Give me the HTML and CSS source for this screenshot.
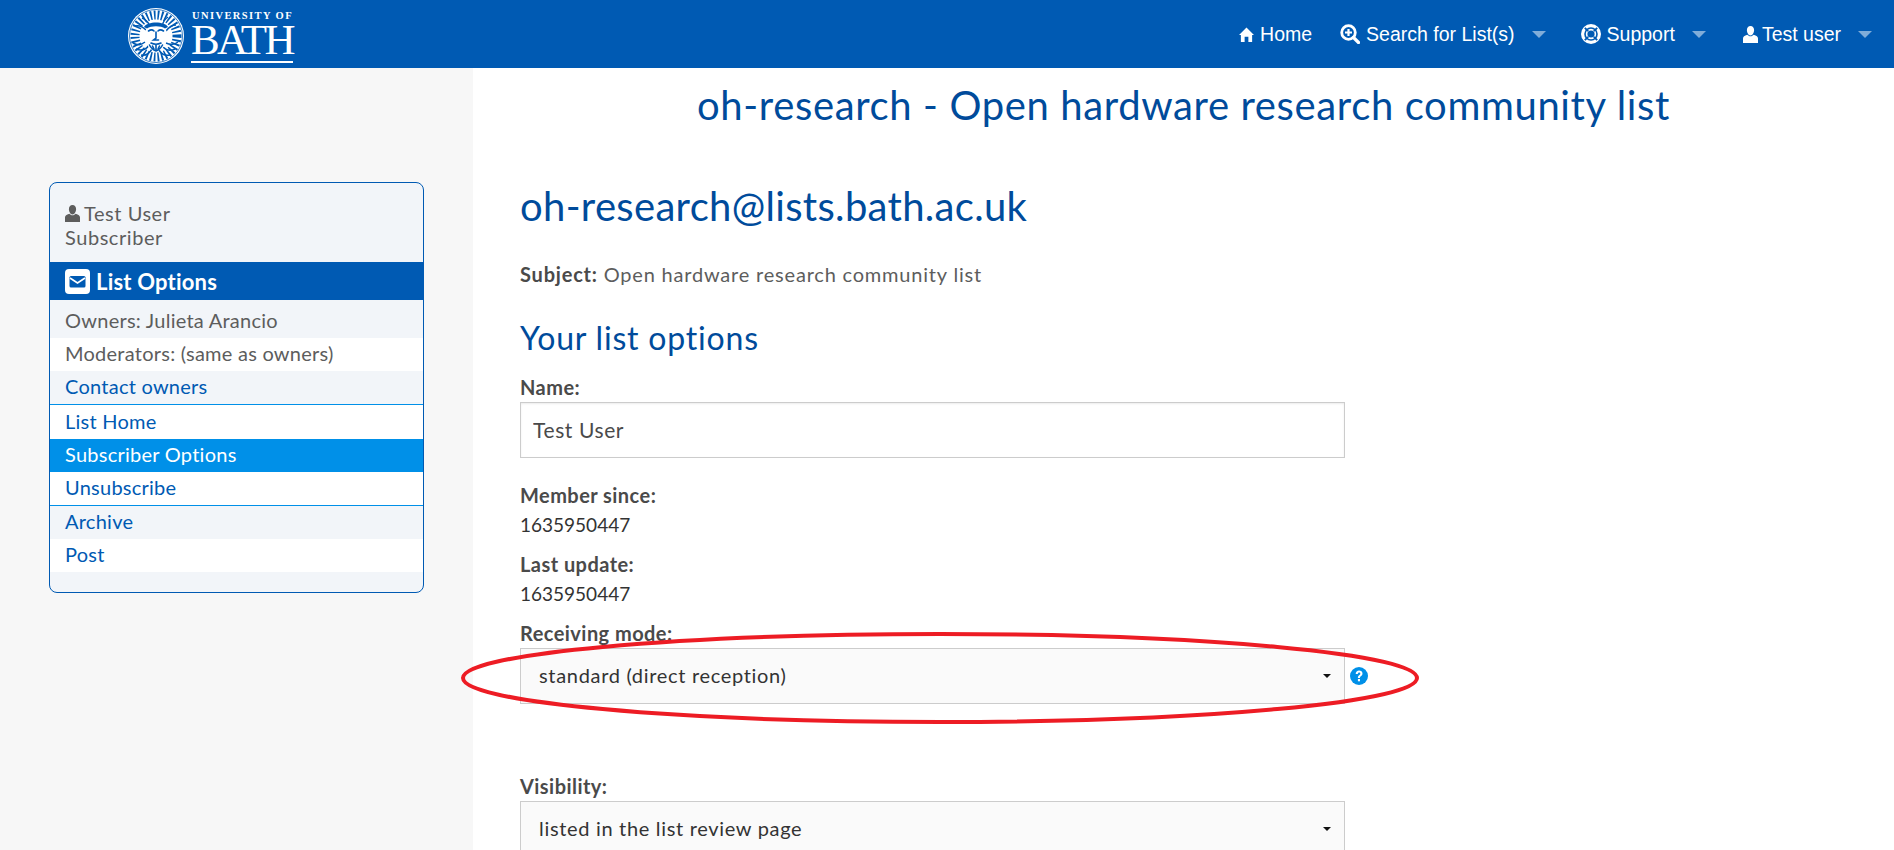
FILE: index.html
```html
<!DOCTYPE html>
<html lang="en">
<head>
<meta charset="utf-8">
<title>oh-research - Open hardware research community list</title>
<link rel="stylesheet" href="styles.css">
</head>
<body>
<header class="topbar">
  <a class="logo" href="#">
    <svg class="crest" viewBox="0 0 56 56" aria-hidden="true">
      <circle cx="28" cy="28" r="28" fill="#fff"/>
      <circle cx="28" cy="28" r="26.500" fill="none" stroke="#005ab3" stroke-width=".8"/>
      <circle cx="28" cy="28" r="21" fill="none" stroke="#005ab3" stroke-width="9" stroke-dasharray="1.700 2"/>
      <g fill="none" stroke="#005ab3" stroke-width="1.500">
        <path d="M5 35c5 3 8 2 12-1M8 41c5 2 10 1 13-4M13 47c4 1 8-1 11-6M31 42c3 5 7 6 11 5M35 39c4 4 8 4 12 2M38 35c4 2 8 2 12-1M7 18c4-1 7 0 11 4M14 10c3 1 6 4 8 8M40 9c-3 2-5 5-6 9M48 17c-4 0-7 2-10 6"/>
      </g>
      <ellipse cx="28" cy="28" rx="11" ry="15" fill="#fff"/>
      <g fill="none" stroke="#005ab3" stroke-width="1.600" stroke-linecap="round">
        <path d="M20.500 23c2-1.500 4-1.500 5.500 0M30 23c1.500-1.500 3.500-1.500 5.500 0M28 24v6l-2.500 2h5"/>
        <path d="M23 35c3 1.500 7 1.500 10 0M21.500 37c1.500 3 3.500 5 6.500 6M34.500 37c-1.500 3-3.500 5-6.500 6M28 37v5M24.500 38l1.500 3M31.500 38l-1.500 3"/>
      </g>
      <path d="M16 19c3-6 21-6 24 0l-3 1.500c-4-3-14-3-18 0z" fill="#005ab3"/>
    </svg>
    <span class="wordmark">
      <span class="wordmark-top">UNIVERSITY OF</span>
      <span class="wordmark-name">BATH</span>
    </span>
  </a>
  <nav class="nav">
    <a class="nav-item" href="#">
      <svg class="nav-icon" viewBox="0 0 16 16" aria-hidden="true"><path d="M8 .5 16 8.500h-2V16h-4v-5.500H6V16H2V8.500H0z" fill="#fff"/></svg>Home
    </a>
    <a class="nav-item nav-drop nav-search" href="#">
      <svg class="nav-icon nav-icon-lg" viewBox="0 0 20 20" aria-hidden="true"><circle cx="8.500" cy="8.500" r="6.800" fill="none" stroke="#fff" stroke-width="2.800"/><path d="M8.500 5v7M5 8.500h7" stroke="#fff" stroke-width="2.200"/><path d="M13.500 13.500l5 5" stroke="#fff" stroke-width="3.200" stroke-linecap="round"/></svg>Search for List(s)
    </a>
    <a class="nav-item nav-drop nav-support" href="#">
      <svg class="nav-icon nav-icon-lg" viewBox="0 0 20 20" aria-hidden="true"><circle cx="10" cy="10" r="10" fill="#fff"/><circle cx="10" cy="10" r="6.800" fill="#005ab3"/><circle cx="10" cy="10" r="5.200" fill="#fff"/><circle cx="10" cy="10" r="3.600" fill="#005ab3"/><path d="M3.800 3.800l3.400 3.400M16.200 3.800l-3.400 3.400M3.800 16.200l3.400-3.400M16.200 16.200l-3.400-3.400" stroke="#005ab3" stroke-width="1.800"/></svg>Support
    </a>
    <a class="nav-item nav-drop nav-user" href="#">
      <svg class="nav-icon" viewBox="0 0 15 17" aria-hidden="true"><path d="M7.500 0c2.300 0 3.600 1.700 3.600 4S9.800 9.500 7.500 9.500 3.900 6.300 3.900 4 5.200 0 7.500 0zM4.300 8.700C1.500 9.600 0 10.800 0 12.500V17h15v-4.500c0-1.700-1.500-2.900-4.300-3.800-.8.900-2 1.500-3.200 1.500s-2.400-.6-3.200-1.500z" fill="#fff"/></svg>Test user
    </a>
  </nav>
</header>

<div class="page">
  <aside class="sidebar">
    <div class="panel">
      <div class="panel-user">
        <div class="user-line"><svg class="user-icon" viewBox="0 0 15 17" aria-hidden="true"><path d="M7.500 0c2.300 0 3.600 1.700 3.600 4S9.800 9.500 7.500 9.500 3.900 6.300 3.900 4 5.200 0 7.500 0zM4.300 8.700C1.500 9.600 0 10.800 0 12.500V17h15v-4.500c0-1.700-1.500-2.900-4.300-3.800-.8.900-2 1.500-3.200 1.500s-2.400-.6-3.200-1.500z" fill="#5d5d5d"/></svg>Test User</div>
        <div>Subscriber</div>
      </div>
      <div class="panel-title">
        <svg class="mail-icon" viewBox="0 0 25 25" aria-hidden="true"><rect width="25" height="25" rx="4" fill="#fff"/><rect x="4.500" y="7" width="16" height="11.500" rx="1.500" fill="#005ab3"/><path d="M5 9l7.500 5L20 9" fill="none" stroke="#fff" stroke-width="1.600"/></svg>
        <span>List Options</span>
      </div>
      <ul class="menu">
        <li class="row row-owners tint">Owners: Julieta Arancio</li>
        <li class="row">Moderators: (same as owners)</li>
        <li class="row tint rule"><a href="#">Contact owners</a></li>
        <li class="row row-home"><a href="#">List Home</a></li>
        <li class="row active"><a href="#">Subscriber Options</a></li>
        <li class="row rule"><a href="#">Unsubscribe</a></li>
        <li class="row tint"><a href="#">Archive</a></li>
        <li class="row"><a href="#">Post</a></li>
      </ul>
    </div>
  </aside>

  <main class="content">
    <h1 class="page-title">oh-research - Open hardware research community list</h1>
    <h2 class="list-address">oh-research@lists.bath.ac.uk</h2>
    <p class="subject"><strong>Subject:</strong> Open hardware research community list</p>
    <h3 class="section-title">Your list options</h3>
    <form class="options">
      <label class="field-label" for="name">Name:</label>
      <input class="text-input" id="name" type="text" value="Test User">
      <div class="field-label label-since">Member since:</div>
      <div class="field-value">1635950447</div>
      <div class="field-label label-update">Last update:</div>
      <div class="field-value">1635950447</div>
      <label class="field-label label-mode" for="mode">Receiving mode:</label>
      <div class="select-row">
        <div class="select-wrap">
          <select class="select" id="mode"><option>standard (direct reception)</option></select>
        </div>
        <svg class="help" viewBox="0 0 18 18" aria-hidden="true"><circle cx="9" cy="9" r="9" fill="#0090e8"/><path d="M5.700 7c0-2.200 1.500-3.400 3.400-3.400s3.400 1.100 3.400 3c0 2.400-2.500 2.500-2.500 4.400H7.900c0-3 2.400-3 2.400-4.300 0-.7-.5-1.200-1.200-1.200S7.900 6 7.800 7z" fill="#fff"/><rect x="7.900" y="12" width="2.100" height="2.300" fill="#fff"/></svg>
      </div>
      <label class="field-label label-visibility" for="visibility">Visibility:</label>
      <div class="select-wrap">
        <select class="select" id="visibility"><option>listed in the list review page</option></select>
      </div>
    </form>
  </main>
</div>

<svg class="annotation" width="970" height="104" viewBox="0 0 970 104" aria-hidden="true">
  <ellipse cx="485" cy="48" rx="477" ry="44" fill="none" stroke="#ed1c24" stroke-width="4"/>
</svg>
</body>
</html>
```

FILE: styles.css
```css
* { box-sizing: border-box; }
html, body { margin: 0; height: 850px; overflow: hidden; }
body {
  position: relative;
  font-family: "Lato", "Open Sans", sans-serif;
  font-size: 20px;
  color: #5d5d5d;
  background: #fff;
}
a { text-decoration: none; }

.topbar {
  height: 68px;
  background: #005ab3;
  display: flex;
  align-items: center;
  justify-content: space-between;
  padding: 0 22px 0 128px;
}
.logo { display: flex; align-items: center; color: #fff; margin-top: 4px; }
.crest { width: 56px; height: 56px; margin-right: 7px; }
.wordmark { display: flex; flex-direction: column; font-family: "Liberation Serif", serif; width: 102px; }
.wordmark-top { font-size: 10.500px; letter-spacing: 1.400px; line-height: 11px; padding-left: 1px; white-space: nowrap; font-weight: 700; }
.wordmark-name { margin-top: 2px; font-size: 43px; line-height: 34px; letter-spacing: -2.600px; border-bottom: 2px solid #fff; padding-bottom: 4px; }

.nav { display: flex; align-items: center; font-family: "Liberation Sans", sans-serif; font-size: 19.500px; }
.nav-item { display: flex; align-items: center; color: #fff; white-space: nowrap; }
.nav-search { margin-left: 28px; }
.nav-support { margin-left: 35px; }
.nav-user { margin-left: 37px; }
.nav-icon { width: 15px; height: 15px; margin-right: 6px; }
.nav-icon-lg { width: 20px; height: 20px; }
.nav-user .nav-icon { height: 17px; margin-right: 4px; }
.nav-drop::after {
  content: "";
  margin-left: 17px;
  border-left: 7px solid transparent;
  border-right: 7px solid transparent;
  border-top: 7px solid rgba(255, 255, 255, .5);
}

.page { display: flex; height: 782px; }
.sidebar { flex: 0 0 473px; background: #f7f7f7; padding: 114px 49px 0; }
.panel {
  width: 375px;
  height: 411px;
  border: 1px solid #005ab3;
  border-radius: 8px;
  overflow: hidden;
  background: #f2f5f9;
}
.panel-user { height: 79px; padding: 18px 15px 0; line-height: 24px; letter-spacing: .55px; }
.user-line { display: flex; align-items: center; }
.user-icon { width: 15px; height: 17px; margin-right: 4px; }
.panel-title {
  height: 38px;
  background: #005ab3;
  color: #fff;
  display: flex;
  align-items: center;
  padding-left: 15px;
  font-size: 22px;
  font-weight: 700;
  letter-spacing: .2px;
}
.mail-icon { width: 25px; height: 25px; margin-right: 6px; }
.menu { list-style: none; margin: 0; padding: 0; letter-spacing: .25px; }
.row { height: 33px; line-height: 31px; padding: 0 15px; background: #fff; }
.row-owners { height: 38px; line-height: 41px; }
.row-home { height: 34px; line-height: 33px; }
.row a { color: #005ab3; }
.tint { background: #f2f5f9; }
.rule { height: 34px; border-bottom: 1px solid #0090e8; }
.active { background: #0090e8; }
.row.active a { color: #fff; }

.content { flex: 1; padding: 0 0 0 47px; position: relative; color: #4a4a4a; }
.page-title {
  margin: 15px 0 0;
  padding-right: 47px;
  text-align: center;
  font-size: 40px;
  font-weight: 400;
  line-height: 44px;
  color: #004b9b;
  letter-spacing: .63px;
}
.list-address { margin: 56px 0 0; font-size: 40px; font-weight: 400; line-height: 46px; color: #004b9b; letter-spacing: .32px; }
.subject { margin: 32px 0 0; line-height: 26px; color: #5d5d5d; letter-spacing: .8px; }
.subject strong { color: #4a4a4a; }
.section-title { margin: 32px 0 0; font-size: 32px; font-weight: 400; line-height: 38px; color: #004b9b; letter-spacing: .8px; }
.options { display: flex; flex-direction: column; align-items: flex-start; }
.field-label { display: block; font-weight: 700; line-height: 26px; letter-spacing: .45px; }
.options > .field-label:first-child { margin-top: 17px; }
.field-value { font-size: 19px; line-height: 26px; color: #333; margin-top: 4px; }
.label-since { margin-top: 24px; }
.label-update { margin-top: 13px; }
.label-mode { margin-top: 13px; }
.label-visibility { margin-top: 69px; }
.text-input {
  width: 825px;
  height: 56px;
  margin-top: 2px;
  padding: 0 12px 2px;
  border: 1px solid #ccc;
  box-shadow: inset 0 1px 2px rgba(0, 0, 0, .08);
  font: inherit;
  font-size: 21px;
  color: #4a4a4a;
  letter-spacing: .6px;
  background: #fff;
}
.select-row { display: flex; align-items: center; }
.help { width: 18px; height: 18px; margin: 1px 0 0 5px; }
.select-wrap { position: relative; width: 825px; height: 56px; margin-top: 2px; }
.select-wrap::after {
  content: "";
  position: absolute;
  right: 14px;
  top: 26px;
  border-left: 4px solid transparent;
  border-right: 4px solid transparent;
  border-top: 4px solid #111;
  pointer-events: none;
}
.select {
  appearance: none;
  width: 100%;
  height: 100%;
  padding: 0 18px 2px;
  border: 1px solid #ccc;
  border-radius: 0;
  background: #fafafa;
  font: inherit;
  color: #333;
  letter-spacing: .68px;
}

.annotation { position: absolute; left: 455px; top: 630px; pointer-events: none; }
```
